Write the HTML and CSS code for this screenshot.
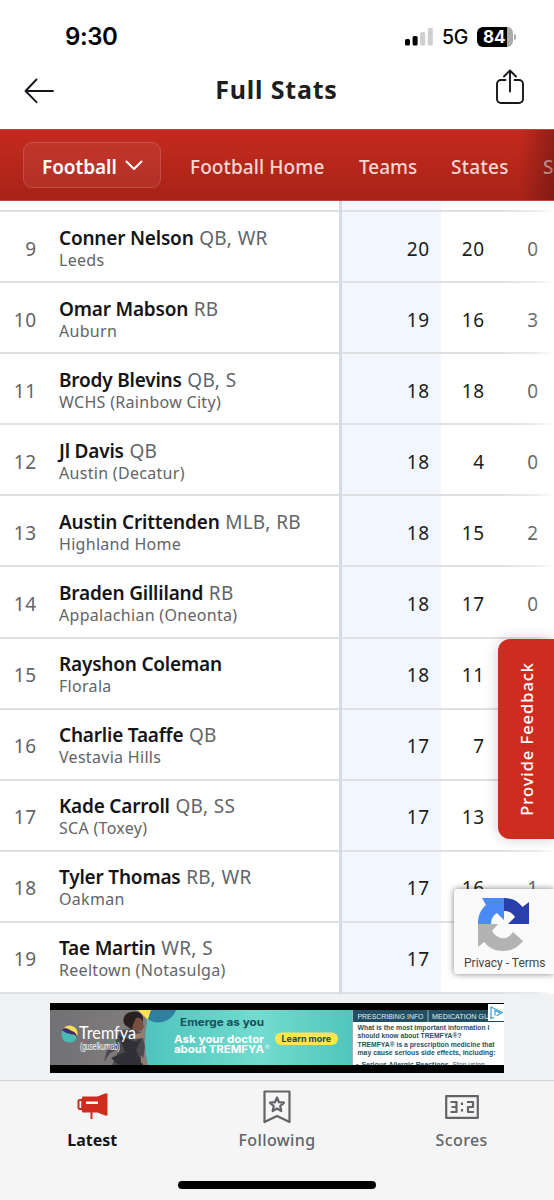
FILE: index.html
```
<!DOCTYPE html>
<html lang="en">
<head>
<meta charset="utf-8">
<title>Full Stats</title>
<link rel="stylesheet" href="styles.css">
</head>
<body>
<div class="app">
  <div class="status">
    <span class="clock">9:30</span>
    <div class="indicators">
      <svg class="signal" width="28" height="18" viewBox="0 0 28 18"><rect x="0" y="11" width="5" height="6.500" rx="1.500"/><rect x="7.600" y="8" width="5" height="9.500" rx="1.500"/><rect class="dim" x="15.200" y="4" width="5" height="13.500" rx="1.500"/><rect class="dim" x="22.800" y="0" width="5" height="17.500" rx="1.500"/></svg>
      <span class="network">5G</span>
      <div class="battery"><span>84</span></div>
      <i class="battery-tip"></i>
    </div>
  </div>
  <header class="titlebar">
    <svg class="back" width="30" height="26" viewBox="0 0 30 26"><path d="M29 13H1.500M12.500 1.500 1.500 13l11 11.200"/></svg>
    <h1>Full Stats</h1>
    <svg class="share" width="28" height="36" viewBox="0 0 28 36"><path d="M9.500 11H5a4 4 0 0 0-4 4v15a4 4 0 0 0 4 4h18a4 4 0 0 0 4-4V15a4 4 0 0 0-4-4h-4.500M14 22.500V1.500M8 7.500l6-6 6 6"/></svg>
  </header>
  <nav class="nav">
    <div class="sport"><span>Football</span> <svg width="18" height="11" viewBox="0 0 18 11"><path d="M1.500 1.500 9 9l7.500-7.500"/></svg></div>
    <span class="link home">Football Home</span>
    <span class="link teams">Teams</span>
    <span class="link states">States</span>
    <span class="link schools">S</span>
    <div class="nav-fade"></div>
  </nav>
  <main class="table">
    <div class="row stub"><span></span><div></div><b class="total"></b><b></b><b></b></div>
    <div class="row"><span>9</span><div><p><strong>Conner Nelson</strong> QB, WR</p><small>Leeds</small></div><b class="total">20</b><b>20</b><b>0</b></div>
    <div class="row"><span>10</span><div><p><strong>Omar Mabson</strong> RB</p><small>Auburn</small></div><b class="total">19</b><b>16</b><b>3</b></div>
    <div class="row"><span>11</span><div><p><strong>Brody Blevins</strong> QB, S</p><small>WCHS (Rainbow City)</small></div><b class="total">18</b><b>18</b><b>0</b></div>
    <div class="row"><span>12</span><div><p><strong>Jl Davis</strong> QB</p><small>Austin (Decatur)</small></div><b class="total">18</b><b>4</b><b>0</b></div>
    <div class="row"><span>13</span><div><p><strong>Austin Crittenden</strong> MLB, RB</p><small>Highland Home</small></div><b class="total">18</b><b>15</b><b>2</b></div>
    <div class="row"><span>14</span><div><p><strong>Braden Gilliland</strong> RB</p><small>Appalachian (Oneonta)</small></div><b class="total">18</b><b>17</b><b>0</b></div>
    <div class="row"><span>15</span><div><p><strong>Rayshon Coleman</strong></p><small>Florala</small></div><b class="total">18</b><b>11</b><b></b></div>
    <div class="row"><span>16</span><div><p><strong>Charlie Taaffe</strong> QB</p><small>Vestavia Hills</small></div><b class="total">17</b><b>7</b><b></b></div>
    <div class="row"><span>17</span><div><p><strong>Kade Carroll</strong> QB, SS</p><small>SCA (Toxey)</small></div><b class="total">17</b><b>13</b><b></b></div>
    <div class="row"><span>18</span><div><p><strong>Tyler Thomas</strong> RB, WR</p><small>Oakman</small></div><b class="total">17</b><b>16</b><b>1</b></div>
    <div class="row"><span>19</span><div><p><strong>Tae Martin</strong> WR, S</p><small>Reeltown (Notasulga)</small></div><b class="total">17</b><b></b><b></b></div>
    <div class="table-fade"></div>
    <div class="feedback"><span>Provide Feedback</span></div>
    <div class="captcha">
      <svg width="54" height="55" viewBox="0 0 54 55">
        <path fill="#2a3fa9" d="M27 1c8 0 14 3 18.500 9l6.500-5v22H31l7-7c-2.500-4-6-6-11-6z"/>
        <path fill="#4a8af5" d="M27 1v22l-7-7c-4 2.500-6 6-6 11H1c0-9 3-15 8-19L5 1z"/>
        <path fill="#b3b3b3" d="M1 27h20l-6 7c3 5 8 8 13 7 4-.600 6-3.500 8-6L46 44c-5 6-11 10-20 10-8 0-14-3-19-9l-6 5z"/>
      </svg>
      <span>Privacy - Terms</span>
    </div>
  </main>
  <section class="ad">
    <svg width="454" height="70" viewBox="0 0 454 70">
      <defs>
        <linearGradient id="teal" x1="0" x2="1"><stop offset="0" stop-color="#4fc4bc"/><stop offset=".55" stop-color="#72dccf"/><stop offset="1" stop-color="#50c5bc"/></linearGradient>
        <linearGradient id="wall" x1="0" x2="1"><stop offset="0" stop-color="#717073"/><stop offset="1" stop-color="#858180"/></linearGradient>
        <clipPath id="creative"><rect y="7" width="454" height="55"/></clipPath>
      </defs>
      <rect width="454" height="70"/>
      <g clip-path="url(#creative)">
        <rect y="7" width="110" height="55" fill="url(#wall)"/>
        <path fill="#28201f" d="M75 22c-4-6 0-12 6-13 7-2 13 2 12 9l-3 6-9 2z"/>
        <path fill="#785042" d="M86 15c5-1 7 2 7 6l1 3-3 4-5 1-4-5z"/>
        <path fill="#4b494e" d="M70 27l12-1 10 4 3 14-3 18H62l8-17-10 5-6 9 3-12 8-7z"/>
        <path fill="#303036" d="M69 33l17 6 6-4-6 12 7 15H69l-8-7 14-6z"/>
        <path fill="#977b6b" d="M82 32l12-3v6l-10 1zM91 52l5 8h-5z"/>
        <path fill="url(#teal)" d="M100 7C95 22 93 44 98 62h206V7z"/>
        <path fill="#ffe64b" d="M88 7h13l-3 10z"/><path fill="#2f7fa0" d="M101 7h25c-4 12-20 16-28 9z"/>
        <circle cx="19.500" cy="31.500" r="8" fill="#48bab4"/><path fill="#f6de56" d="M14 25a8 8 0 0 1 13.500 7c-2 5-3-1-13.500-7z"/><path fill="#432a70" d="M12 27c4-4 7 0 10 1s5 3 5 7c-3-6-9-2-15-8z"/>
        <g class="ad-text">
          <text class="brand" x="29" y="36" textLength="57" lengthAdjust="spacingAndGlyphs">Tremfya</text>
          <text class="generic" x="30" y="47" textLength="40" lengthAdjust="spacingAndGlyphs">(guselkumab)</text>
          <text class="head dark" x="130" y="22.700" textLength="84" lengthAdjust="spacingAndGlyphs">Emerge as you</text>
          <text class="head" x="124" y="39.500" textLength="90" lengthAdjust="spacingAndGlyphs">Ask your doctor</text>
          <text class="head" x="124" y="50" textLength="90" lengthAdjust="spacingAndGlyphs">about TREMFYA</text>
          <text class="reg" x="215" y="46">®</text>
          <rect x="225" y="29.500" width="63" height="12.500" rx="6.250" fill="#fbe64d"/>
          <text class="cta" x="231.500" y="38.800" textLength="49.500" lengthAdjust="spacingAndGlyphs">Learn more</text>
          <rect x="303" y="7" width="151" height="55" fill="#fff"/><rect x="303" y="7" width="151" height="12" fill="#225062"/><path stroke="#9ab3bd" d="M378 7v12M302.500 7v55"/>
          <text class="tab" x="307.500" y="16" textLength="66" lengthAdjust="spacingAndGlyphs">PRESCRIBING INFO</text>
          <text class="tab" x="382" y="16" textLength="69" lengthAdjust="spacingAndGlyphs">MEDICATION GUIDE</text>
          <text class="copy" x="307.500" y="26.500" textLength="132" lengthAdjust="spacingAndGlyphs">What is the most important information I</text>
          <text class="copy" x="307.500" y="35" textLength="104" lengthAdjust="spacingAndGlyphs">should know about TREMFYA®?</text>
          <text class="copy" x="307.500" y="43.700" textLength="137" lengthAdjust="spacingAndGlyphs">TREMFYA® is a prescription medicine that</text>
          <text class="copy" x="307.500" y="52.200" textLength="138" lengthAdjust="spacingAndGlyphs">may cause serious side effects, including:</text>
          <text class="copy" x="306" y="63.500">•</text>
          <text class="copy" x="311.500" y="63.500" textLength="89" lengthAdjust="spacingAndGlyphs">Serious Allergic Reactions.</text>
          <text class="copy plain" x="402.500" y="63.500" textLength="32" lengthAdjust="spacingAndGlyphs">Stop using</text>
        </g>
      </g>
      <rect x="438" y="1" width="16" height="17" fill="#fff"/>
      <path fill="none" stroke="#42a5cf" stroke-width="1.300" stroke-linejoin="round" d="M444 14.300 441 15.500V4l11.500 5.500-6 3.200M445 12.500V7.500l5 2.300"/>
    </svg>
  </section>
  <footer class="tabs">
    <div class="tab-item active">
      <svg width="32" height="32" viewBox="0 0 32 32"><path fill="#cf2c1e" d="M1.500 9.500 3 8h2.500l1-2.500h15L29 2.500h2.500v22H29l-7.500-3h-5V28h-2v-6.500h-8l-1-2.500H3l-1.500-1.500z"/><path fill="#f5f5f5" d="M10 10.500h12v2.500H10zM3.500 10h1.700v7H3.500z"/></svg>
      <span>Latest</span>
    </div>
    <div class="tab-item following">
      <svg class="lines" width="32" height="34" viewBox="0 0 32 34"><path d="M3.500 1.500h25v30.500L16 26 3.500 32z"/><path d="m16 7.500 2 4.700 5 .500-3.800 3.400 1.100 5-4.300-2.600-4.300 2.600 1.100-5L9 12.700l5-.500z"/></svg>
      <span>Following</span>
    </div>
    <div class="tab-item scores">
      <svg class="lines" width="34" height="24" viewBox="0 0 34 24"><path d="M1.200 1.200h31.600v21.600H1.200z"/><path d="M5.500 7h6v10h-6M6.500 12h5M22 7h6v5h-5v5h6"/><path d="M17 7.500v2.500M17 14v2.500"/></svg>
      <span>Scores</span>
    </div>
  </footer>
  <i class="home-bar"></i>
</div>
</body>
</html>
```
FILE: styles.css
```
* { box-sizing: border-box; }
body { margin: 0; background: #fff; font-family: "Noto Sans", sans-serif; color: #1c1e21; }
.app { width: 554px; height: 1200px; display: flex; flex-direction: column; overflow: hidden; position: relative; }
.app svg { display: block; }

.status { height: 54px; flex: none; display: flex; justify-content: space-between; padding: 20px 38px 0 65px; font-family: Inter, sans-serif; color: #000; }
.clock { font-size: 24px; line-height: 34px; font-weight: 600; letter-spacing: -.4px; }
.indicators { display: flex; align-items: center; height: 34px; }
.signal { fill: #000; }
.signal .dim { fill: #cfcfcf; }
.network { font-size: 19.5px; letter-spacing: -.2px; margin-left: 9px; width: 35px; font-weight: 450; }
.battery { width: 36px; height: 20px; border-radius: 6px; background: linear-gradient(90deg, #000 30px, #aaa 30px); color: #fff; font-size: 17px; font-weight: 700; line-height: 20px; padding-left: 6px; }
.battery-tip { width: 2px; height: 6px; background: #aaa; border-radius: 0 2px 2px 0; margin-left: 1px; }

.titlebar { height: 75px; flex: none; display: flex; justify-content: space-between; align-items: center; padding: 0 30px 4px 24px; }
.titlebar svg { fill: none; stroke: #15171a; stroke-width: 1.9; stroke-linecap: round; stroke-linejoin: round; }
.back { margin-top: 2px; }
.share { margin-top: -6px; }
.titlebar h1 { margin: 0 0 1px 3px; font-size: 25px; font-weight: 750; line-height: 34px; letter-spacing: .8px; }

.nav { height: 72px; flex: none; display: flex; align-items: center; padding-left: 23px; position: relative; overflow: hidden; background: linear-gradient(#c42a1e, #a82318); border-top: 1px solid #b3473f; border-bottom: 1px solid #b84840; color: #f8d6d2; font-size: 19px; font-weight: 500; white-space: nowrap; }
.sport { display: flex; align-items: center; gap: 8px; width: 138px; height: 46px; flex: none; padding-left: 18px; border: 1px solid rgba(255,255,255,.14); border-radius: 9px; background: rgba(255,255,255,.06); color: #fff; font-weight: 600; }
.sport span, .link { padding-top: 4px; }
.sport span { letter-spacing: -.05px; }
.sport svg { fill: none; stroke: #fff; stroke-width: 2; stroke-linecap: round; stroke-linejoin: round; }
.link { flex: none; }
.home { margin-left: 29px; width: 169px; letter-spacing: .1px; }
.teams { width: 92px; }
.states { width: 92px; letter-spacing: .3px; }
.nav-fade { position: absolute; top: 0; right: 0; bottom: 0; width: 34px; background: linear-gradient(90deg, rgba(90,20,15,0), rgba(90,20,15,.5)); }

.table { height: 793px; flex: none; position: relative; display: grid; grid-template-rows: 11px repeat(11, 1fr); }
.row { display: grid; grid-template-columns: 36px 306px 99px 43px 54px; align-items: center; min-height: 0; border-bottom: 2px solid #dfe0e3; font-size: 19px; color: #626468; }
.row > span { text-align: right; letter-spacing: .8px; padding-top: 4px; margin-right: -1px; }
.row > div { align-self: stretch; padding: 11.5px 0 0 23px; border-right: 3px solid #dadbe2; margin-bottom: -2px; white-space: nowrap; }
.row p { margin: 0; line-height: 28px; font-size: 19px; letter-spacing: .22px; word-spacing: .5px; }
.row strong { font-weight: 600; color: #141518; letter-spacing: -.2px; word-spacing: 0; }
.row small { display: block; font-size: 16px; line-height: 17px; letter-spacing: .3px; }
.row > b { font-weight: 400; text-align: right; color: #1b1d20; letter-spacing: .8px; padding-top: 4px; margin-right: -1px; }
.row > .total { align-self: stretch; display: flex; align-items: center; justify-content: flex-end; padding-right: 11px; margin-right: 0; background: #f2f6fe; }
.row.stub > div { padding: 0; }
.table-fade { position: absolute; top: 0; right: 0; bottom: 0; width: 50px; background: linear-gradient(90deg, rgba(255,255,255,.1), rgba(255,255,255,.32) 60%, #fff); }
.feedback { position: absolute; top: 438px; right: 0; width: 56px; height: 200px; border-radius: 12px 0 0 12px; background: #cd2c1e; box-shadow: 0 0 14px rgba(0,0,0,.2); display: flex; align-items: center; justify-content: center; color: #fff; font-size: 16.5px; font-weight: 500; letter-spacing: .95px; }
.feedback span { writing-mode: vertical-rl; transform: rotate(180deg); white-space: nowrap; }
.captcha { position: absolute; top: 688px; right: 0; width: 100px; height: 85px; background: #fafafa; border-radius: 3px 0 0 3px; box-shadow: 0 0 6px rgba(0,0,0,.5); padding: 8px 0 0 23px; font: 12px/14px Roboto, sans-serif; color: #444; }
.captcha span { display: block; margin: 4px 0 0 -13px; width: 84px; white-space: nowrap; }

.ad { height: 87px; flex: none; padding: 9px 0 0 50px; background: #eff1f2; border-bottom: 1px solid #d0d2d3; }
.ad-text { font-family: "Liberation Sans", sans-serif; }
.brand { font: 17px Lato, sans-serif; fill: #fff; }
.generic { font: 11px "Liberation Sans", sans-serif; fill: #fff; }
.head { font: 700 11px Inter, sans-serif; fill: #fff; }
.head.dark { fill: #14515f; }
.reg { font-size: 6px; fill: #fff; }
.cta { font: 700 9px Inter, sans-serif; fill: #174a58; }
.tab { font-size: 7px; fill: #e0ecf0; }
.copy { font-size: 7px; font-weight: 700; fill: #1f5264; }
.copy.plain { font-weight: 400; }

.tabs { flex: 1; background: #f5f5f5; display: grid; grid-template-columns: repeat(3, 1fr); padding-top: 9px; }
.tab-item { display: flex; flex-direction: column; align-items: center; font-size: 16px; line-height: 22px; font-weight: 500; color: #626468; }
.tab-item svg { height: 34px; }
.tab-item span { margin-top: 5px; }
.tab-item.active { color: #141518; font-weight: 700; }
.following span { letter-spacing: .4px; }
.scores span { letter-spacing: .4px; }
.lines { fill: none; stroke: #626468; stroke-width: 2.2; stroke-linejoin: round; }
.home-bar { position: absolute; left: 178px; top: 1181px; width: 198px; height: 8px; border-radius: 4px; background: #000; }
```
